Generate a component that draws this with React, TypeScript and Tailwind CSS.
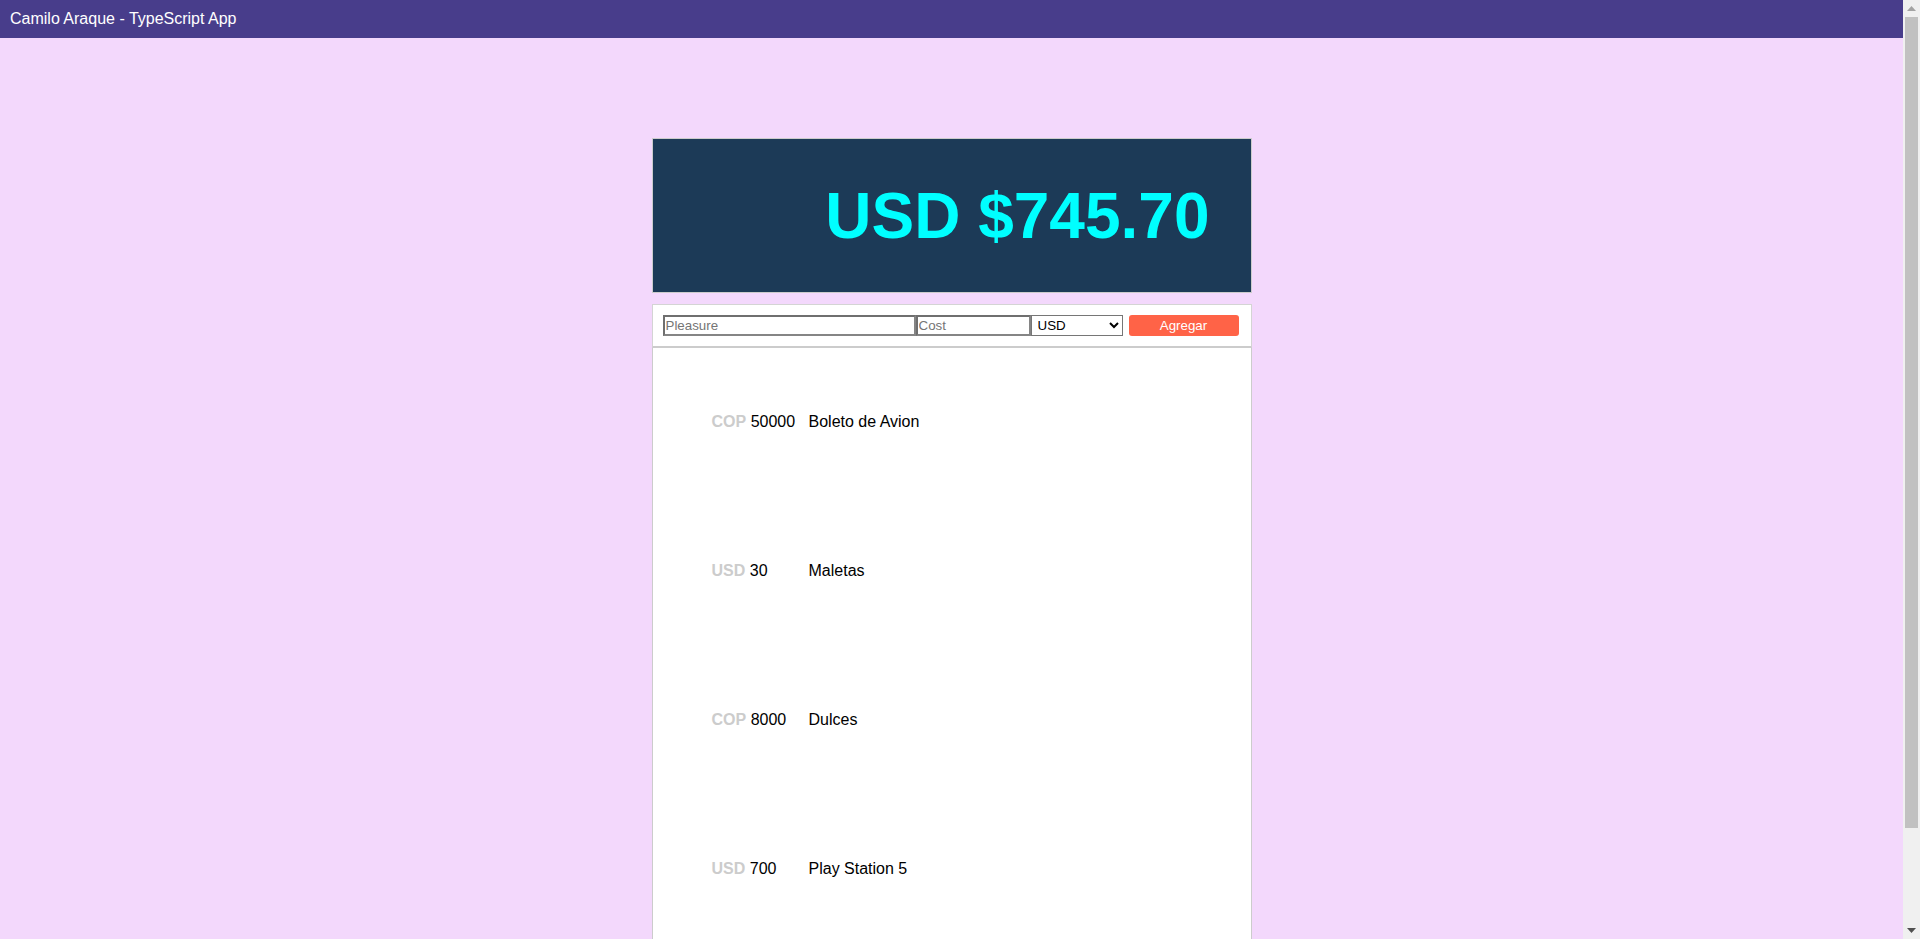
import React, { useState } from 'react';

type Item = { currency: string; cost: number; name: string };

const items: Item[] = [
  { currency: 'COP', cost: 50000, name: 'Boleto de Avion' },
  { currency: 'USD', cost: 30, name: 'Maletas' },
  { currency: 'COP', cost: 8000, name: 'Dulces' },
  { currency: 'USD', cost: 700, name: 'Play Station 5' },
];

function Row({ item }: { item: Item }) {
  return (
    <div className="flex items-center py-[65.2px] pl-[59px] leading-[18.4px]">
      <div className="w-[97px]">
        <span className="font-bold text-[#cccccc]">{item.currency}</span> {item.cost}
      </div>
      <div>{item.name}</div>
    </div>
  );
}

// the browser's scrollbar from the screenshot
function Scrollbar() {
  return (
    <div className="sticky top-0 flex h-screen w-[17px] shrink-0 flex-col items-center bg-[#f0f0f0]">
      <div className="flex h-[17px] items-center justify-center">
        <svg width="9" height="5" viewBox="0 0 9 5">
          <path d="M0 5 L4.5 0 L9 5 Z" fill="#a3a3a3" />
        </svg>
      </div>
      <div className="h-[811px] w-[13px] bg-[#c1c1c1]" />
      <div className="flex-1" />
      <div className="flex h-[17px] items-center justify-center">
        <svg width="9" height="5" viewBox="0 0 9 5">
          <path d="M0 0 L4.5 5 L9 0 Z" fill="#505050" />
        </svg>
      </div>
    </div>
  );
}

function App() {
  const [pleasure, setPleasure] = useState('');
  const [cost, setCost] = useState('');
  const [currency, setCurrency] = useState('USD');

  return (
    <div className="flex min-h-screen font-['Liberation_Sans',Arial,sans-serif] text-base text-black">
      <div className="min-w-0 flex-1 bg-[#f3d8fc]">
        <nav className="flex h-[38px] items-center bg-[#483d8b] px-[10px] text-white">
          Camilo Araque - TypeScript App
        </nav>

        <div className="mx-auto mt-[100px] w-[600px] pb-[107px]">
          {/* total */}
          <div className="flex h-[155px] items-center justify-end border border-[#cccccc] bg-[#1c3a57] pr-[41px]">
            <h1 className="text-[64px] leading-none font-bold text-[#00ffff]">USD $745.70</h1>
          </div>

          {/* form */}
          <div className="mt-[11px] flex items-center border border-b-2 border-[#d4d4d4] border-b-[#cccccc] bg-white p-[10px] text-[13.33px]">
            <input
              className="h-[21px] w-[253px] border-2 border-[#858585] border-t-[#6f6f6f] border-l-[#6f6f6f] px-[1px] placeholder:text-[#757575]"
              placeholder="Pleasure"
              value={pleasure}
              onChange={e => setPleasure(e.target.value)}
            />
            <input
              className="h-[21px] w-[115px] border-2 border-[#858585] border-t-[#6f6f6f] border-l-[#6f6f6f] px-[1px] placeholder:text-[#757575]"
              placeholder="Cost"
              value={cost}
              onChange={e => setCost(e.target.value)}
            />
            <select
              className="h-[21px] w-[92px] border border-[#767676] bg-white px-[2px]"
              value={currency}
              onChange={e => setCurrency(e.target.value)}
            >
              <option>USD</option>
              <option>COP</option>
            </select>
            <button className="ml-[6px] h-[21px] w-[110px] rounded-[3px] bg-[#ff6347] text-white">Agregar</button>
          </div>

          {/* list */}
          <div className="border-x border-[#cccccc] bg-white">
            {items.map((item, i) => (
              <Row key={i} item={item} />
            ))}
          </div>
        </div>
      </div>
      <Scrollbar />
    </div>
  );
}

export default App;
